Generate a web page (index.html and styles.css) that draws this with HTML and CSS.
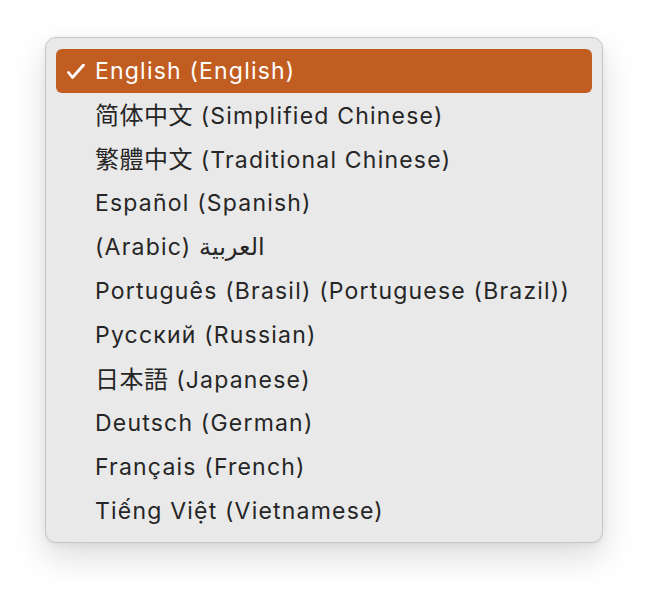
FILE: index.html
```html
<!DOCTYPE html>
<html lang="en">
<head>
<meta charset="utf-8">
<title>Language menu</title>
<link rel="stylesheet" href="styles.css">
</head>
<body>
<div class="menu">
  <div class="item selected">
    <svg class="check" viewBox="0 0 20 16" width="20" height="16"><path d="M2.5 8.5 L6.5 13.5 L17.5 1" fill="none" stroke="#fff" stroke-width="2.8" stroke-linecap="round" stroke-linejoin="round"/></svg>
    <span>English (English)</span>
  </div>
  <div class="item"><span><span class="cjk sc" lang="zh-Hans">简体中文</span> (Simplified Chinese)</span></div>
  <div class="item"><span><span class="cjk tc" lang="zh-Hant">繁體中文</span> (Traditional Chinese)</span></div>
  <div class="item"><span>Español (Spanish)</span></div>
  <div class="item"><span>(Arabic) <span class="ar" lang="ar">العربية</span></span></div>
  <div class="item"><span>Português (Brasil) (Portuguese (Brazil))</span></div>
  <div class="item"><span>Русский (Russian)</span></div>
  <div class="item"><span><span class="cjk jp" lang="ja">日本語</span> (Japanese)</span></div>
  <div class="item"><span>Deutsch (German)</span></div>
  <div class="item"><span>Français (French)</span></div>
  <div class="item"><span>Tiếng Việt (Vietnamese)</span></div>
</div>
</body>
</html>
```
FILE: styles.css
```css
html, body {
  margin: 0;
  padding: 0;
  background: #ffffff;
}
body {
  box-sizing: border-box;
  min-height: 596px;
  padding: 37px 0 0 45px;
  font-family: Inter, "Noto Sans", sans-serif;
}
.menu {
  box-sizing: border-box;
  width: 558px;
  height: 506px;
  padding: 11px 10px 9px;
  background: #e9e9e9;
  border: 1px solid #c6c6c6;
  border-radius: 11px;
  box-shadow: 0 14px 34px rgba(0, 0, 0, 0.14), 0 2px 6px rgba(0, 0, 0, 0.06);
  display: flex;
  flex-direction: column;
}
.item {
  position: relative;
  flex: 0 0 44px;
  height: 44px;
  display: flex;
  align-items: center;
  padding-left: 39px;
  font-size: 23px;
  line-height: 28px;
  letter-spacing: 1.2px;
  color: #262626;
  border-radius: 6px;
  white-space: nowrap;
}
.item.selected {
  background: #c15d20;
  color: #ffffff;
}
.check {
  position: absolute;
  left: 10px;
  top: 15px;
}
.cjk {
  font-size: 24px;
  letter-spacing: 0.5px;
}
.sc { font-family: "Noto Sans CJK SC", sans-serif; }
.tc { font-family: "Noto Sans CJK TC", sans-serif; }
.jp { font-family: "Noto Sans CJK JP", sans-serif; }
.ar { font-family: "DejaVu Sans", "Noto Sans", sans-serif; font-size: 24px; letter-spacing: 0; }
```
